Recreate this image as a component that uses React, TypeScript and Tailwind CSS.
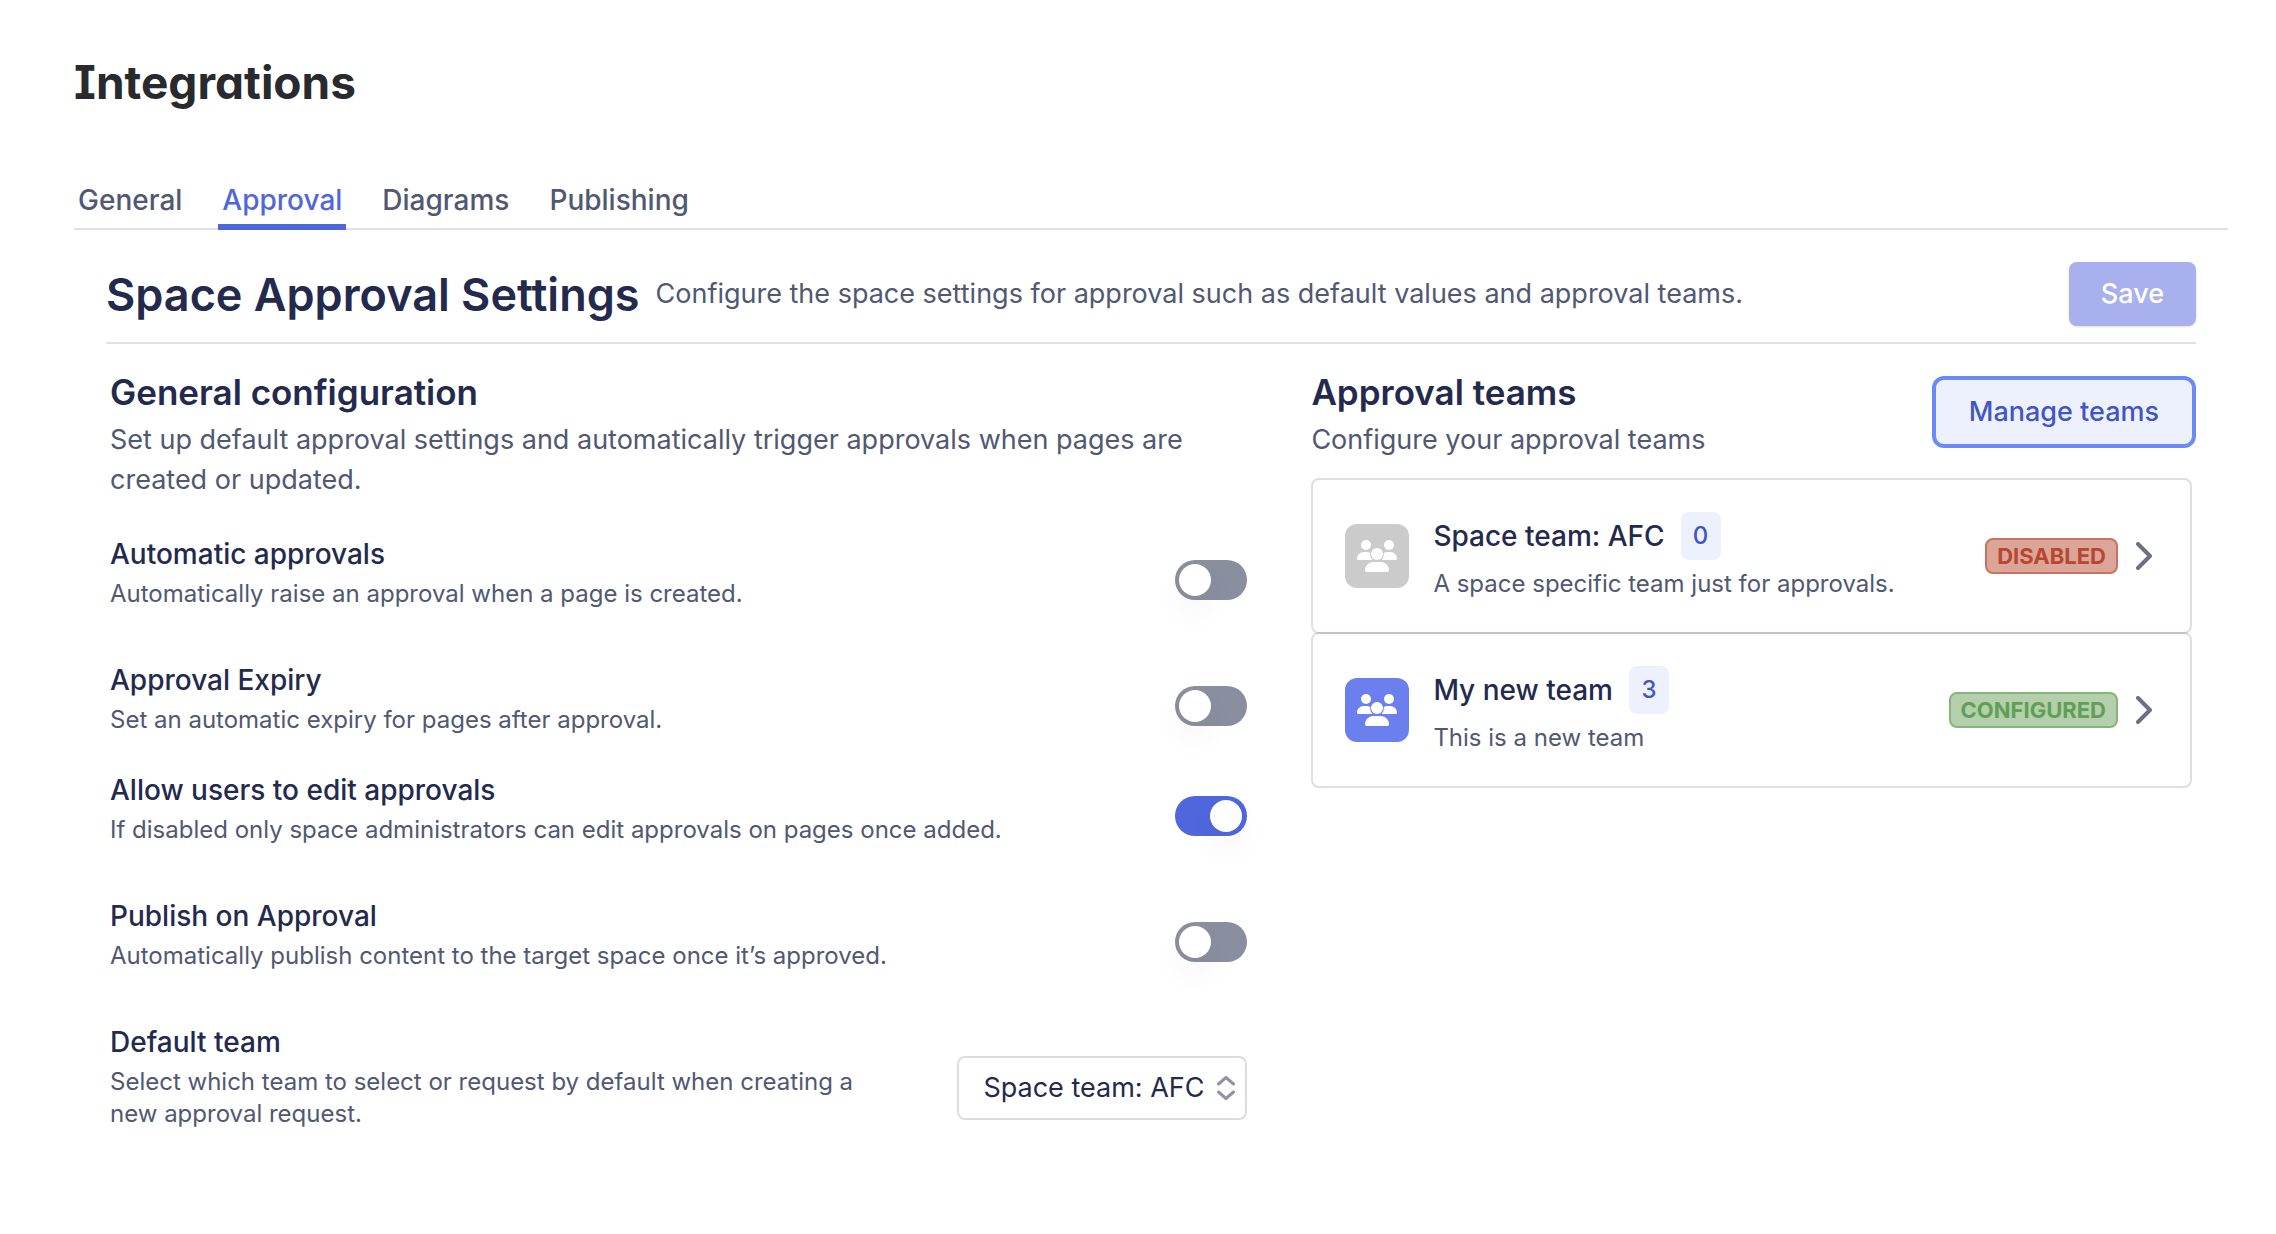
const tabs = ["General", "Approval", "Diagrams", "Publishing"];

const settings = [
  {
    id: "automatic-approvals",
    title: "Automatic approvals",
    description: "Automatically raise an approval when a page is created.",
    enabled: false,
    className: "mb-[34px]",
  },
  {
    id: "approval-expiry",
    title: "Approval Expiry",
    description: "Set an automatic expiry for pages after approval.",
    enabled: false,
    className: "mb-[18px]",
  },
  {
    id: "edit-approvals",
    title: "Allow users to edit approvals",
    description: "If disabled only space administrators can edit approvals on pages once added.",
    enabled: true,
    className: "mb-[34px]",
  },
  {
    id: "publish-on-approval",
    title: "Publish on Approval",
    description: "Automatically publish content to the target space once it’s approved.",
    enabled: false,
    className: "mb-[34px]",
  },
];

const teams = [
  {
    name: "Space team: AFC",
    description: "A space specific team just for approvals.",
    members: 0,
    status: "DISABLED",
    iconClass: "bg-[#cbcbcb]",
    statusClass: "border-[#c97262] bg-[#dba598] text-[#b8472f]",
  },
  {
    name: "My new team",
    description: "This is a new team",
    members: 3,
    status: "CONFIGURED",
    iconClass: "bg-[#6b80ee]",
    statusClass: "border-[#86b57c] bg-[#b3cfab] text-[#619f56]",
  },
];

function TeamIcon() {
  return (
    <svg viewBox="0 0 40 32" className="w-10 h-8" fill="currentColor" aria-hidden="true">
      <circle cx="9" cy="5" r="5" />
      <circle cx="32" cy="5" r="5" />
      <path d="M0 18.7C0 15 3 12 6.7 12h2.6c1.5 0 2.9.4 4 1-.1.5-.1 1-.1 1.6 0 2.2.9 4.2 2.3 5.400H1.3A1.3 1.3 0 0 1 0 18.7z" />
      <path d="M40 18.7c0-3.7-3-6.700-6.700-6.700h-2.600c-1.500 0-2.900.4-4 1 .1.5.1 1 .1 1.600 0 2.200-.9 4.200-2.300 5.400h14.200c.7 0 1.300-.6 1.300-1.300z" />
      <circle cx="20" cy="14" r="6" />
      <path d="M8 30.300C8 25.700 11.700 22 16.300 22h7.400c4.600 0 8.300 3.700 8.300 8.300 0 .9-.7 1.700-1.700 1.700H9.700C8.700 32 8 31.200 8 30.300z" />
    </svg>
  );
}

function Toggle({ id, enabled }: { id: string; enabled: boolean }) {
  return (
    <span className="relative inline-flex shrink-0 w-18 h-10">
      <input
        id={id}
        type="checkbox"
        role="switch"
        defaultChecked={enabled}
        className="peer appearance-none w-full h-full rounded-full bg-[#8a8fa0] checked:bg-[#5066dc] cursor-pointer"
      />
      <span className="absolute top-1 left-1 size-8 rounded-full bg-white shadow-[0_16px_28px_4px_rgba(0,0,0,0.03)] pointer-events-none peer-checked:left-[35px]" />
    </span>
  );
}

export default function App() {
  return (
    <div className="min-h-screen bg-white pl-[74px] pr-12 pt-[54px] font-['Inter',sans-serif] text-[27px] leading-10 text-[#505872]">
      <h1 className="text-[46px] leading-14 font-bold text-[#292a2e] [font-feature-settings:'cv08','cv11']">
        Integrations
      </h1>

      <nav className="mt-[70px] flex gap-8 border-b-2 border-[#e0e0e7] text-[28px] font-medium">
        {tabs.map((tab) => (
          <a
            key={tab}
            href="#"
            className={
              tab === "Approval"
                ? "-mb-0.5 px-1 pb-1 border-b-6 border-[#5066dc] text-[#5066dc]"
                : "px-1 pb-2"
            }
          >
            {tab}
          </a>
        ))}
      </nav>

      <main className="mx-8">
        <header className="flex items-center justify-between border-b-2 border-[#e0e0e7] pt-8 pb-4">
          <div className="flex items-center gap-4">
            <h2 className="pt-0.5 text-[45px] leading-15 font-semibold text-[#232a4d]">Space Approval Settings</h2>
            <p>Configure the space settings for approval such as default values and approval teams.</p>
          </div>
          <button className="h-16 px-8 rounded-lg bg-[#a8b0ed] text-white font-medium shadow-sm">Save</button>
        </header>

        <div className="ml-1 grid grid-cols-[9fr_7fr] gap-16">
          {/* General configuration */}
          <section className="pt-[26px]">
            <h3 className="text-[35px] leading-11 font-semibold text-[#232a4d]">General configuration</h3>
            <p className="mt-1.5">
              Set up default approval settings and automatically trigger approvals when pages are created or updated.
            </p>

            <div className="mt-[34px]">
              {settings.map((item) => (
                <div key={item.id} className={`flex items-center justify-between ${item.className}`}>
                  <div className="pb-3">
                    <label htmlFor={item.id} className="block text-[28px] font-medium text-[#232a4d]">
                      {item.title}
                    </label>
                    <p className="text-2xl leading-10">{item.description}</p>
                  </div>
                  <Toggle id={item.id} enabled={item.enabled} />
                </div>
              ))}

              <div className="flex items-center justify-between">
                <div className="max-w-[760px] pb-6">
                  <label htmlFor="default-team" className="block text-[28px] font-medium text-[#232a4d]">
                    Default team
                  </label>
                  <p className="mt-1 text-2xl leading-8">
                    Select which team to select or request by default when creating a new approval request.
                  </p>
                </div>
                <div className="relative">
                  <select
                    id="default-team"
                    className="appearance-none w-[290px] h-16 pl-6 pr-10 rounded-lg border-2 border-[#dcdde4] bg-white text-[#232a4d]"
                  >
                    <option>Space team: AFC</option>
                    <option>My new team</option>
                  </select>
                  <svg
                    viewBox="0 0 18 24"
                    className="absolute right-3 top-5 w-[18px] h-6 pointer-events-none"
                    fill="none"
                    stroke="#8f93a8"
                    strokeWidth="3"
                    strokeLinecap="round"
                    strokeLinejoin="round"
                    aria-hidden="true"
                  >
                    <path d="M1.5 8 9 1.5 16.5 8M1.5 16 9 22.5 16.5 16" />
                  </svg>
                </div>
              </div>
            </div>
          </section>

          {/* Approval teams */}
          <section>
            <div className="flex items-start justify-between">
              <div className="pt-[26px]">
                <h3 className="text-[35px] leading-11 font-semibold text-[#232a4d]">Approval teams</h3>
                <p className="mt-1.5">Configure your approval teams</p>
              </div>
              <button className="mt-8 h-18 px-[33px] rounded-xl border-4 border-[#6b8af8] bg-[#edf1fe] text-[#4155c6] font-medium">
                Manage teams
              </button>
            </div>

            <div className="mt-[18px] mr-1">
              {teams.map((team) => (
                <a
                  key={team.name}
                  href="#"
                  className="-mb-0.5 flex items-center h-39 px-8 rounded-lg border-2 border-[#23234d]/15"
                >
                  <span className={`flex items-center justify-center size-16 rounded-xl text-white ${team.iconClass}`}>
                    <TeamIcon />
                  </span>
                  <div className="ml-6 pt-1">
                    <div className="flex items-center gap-4">
                      <h4 className="text-[28px] font-medium text-[#232a4d]">{team.name}</h4>
                      <span className="flex items-center justify-center w-10 h-12 rounded-lg bg-[#edf1fe] text-2xl font-medium text-[#4155c6]">
                        {team.members}
                      </span>
                    </div>
                    <p className="mt-1 text-2xl leading-10">{team.description}</p>
                  </div>
                  <span className={`ml-auto px-2.5 rounded-lg border-2 text-[22px] leading-8 font-bold ${team.statusClass}`}>
                    {team.status}
                  </span>
                  <svg
                    viewBox="0 0 16 28"
                    className="ml-[18px] mr-1.5 w-4 h-7"
                    fill="none"
                    stroke="#6b7085"
                    strokeWidth="4"
                    strokeLinecap="round"
                    strokeLinejoin="round"
                    aria-hidden="true"
                  >
                    <path d="M2 2 14 14 2 26" />
                  </svg>
                </a>
              ))}
            </div>
          </section>
        </div>
      </main>
    </div>
  );
}
